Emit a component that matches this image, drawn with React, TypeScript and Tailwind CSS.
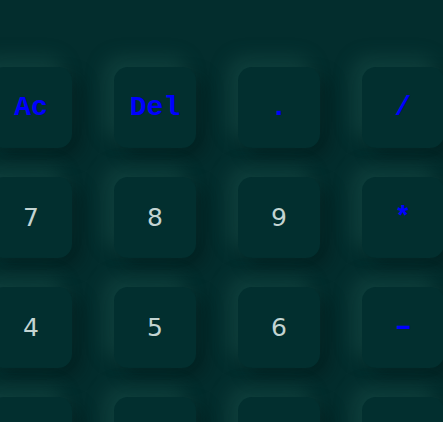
const keys: { label: string; op?: boolean }[] = [
  { label: 'Ac', op: true },
  { label: 'Del', op: true },
  { label: '.', op: true },
  { label: '/', op: true },
  { label: '7' },
  { label: '8' },
  { label: '9' },
  { label: '*', op: true },
  { label: '4' },
  { label: '5' },
  { label: '6' },
  { label: '-', op: true },
  { label: '1' },
  { label: '2' },
  { label: '3' },
  { label: '+', op: true },
];

export default function App() {
  return (
    <div className="h-[422px] w-[443px] overflow-hidden bg-[#032d2d]">
      <div className="-ml-[10px] grid w-[500px] grid-cols-[repeat(4,82px)] gap-x-[42px] gap-y-[29px] pt-[67px]">
        {keys.map((k) => (
          <button
            key={k.label}
            className={
              'flex h-[81px] items-center justify-center rounded-[14px] bg-[#022f2f] shadow-[-9px_-9px_20px_rgba(45,105,95,0.32),9px_9px_18px_rgba(0,18,18,0.4)] ' +
              (k.op
                ? "font-['Liberation_Mono',monospace] text-[28px] font-bold text-[#0000ff]"
                : "font-['DejaVu_Sans',sans-serif] text-[25px] text-[#c3d4d2]")
            }
          >
            {k.label === '-' ? <span className="inline-block scale-x-[1.6]">-</span> : k.label}
          </button>
        ))}
      </div>
    </div>
  );
}
